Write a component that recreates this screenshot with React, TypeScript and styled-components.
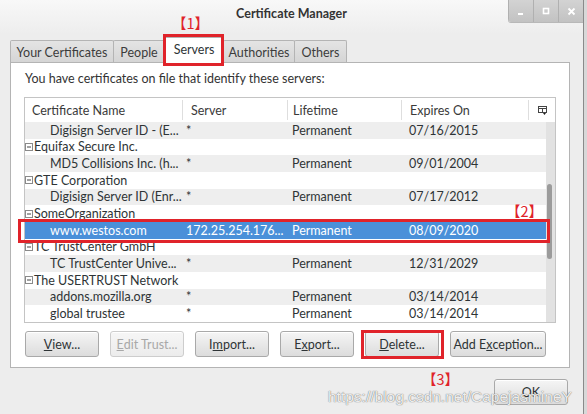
import React from "react";
import styled, { createGlobalStyle } from "styled-components";

const GlobalStyle = createGlobalStyle`
  html, body {
    margin: 0;
    padding: 0;
    background: #ededed;
  }
  body {
    font-family: Lato, "Liberation Sans", sans-serif;
    color: #2e3436;
  }
`;

const RED = "#e0232a";

const Screen = styled.div`
  position: relative;
  width: 587px;
  height: 414px;
  overflow: hidden;
  display: flex;
  background: #ededed;
`;

const Main = styled.div`
  width: 583px;
  display: flex;
  flex-direction: column;
`;

const RightEdge = styled.div`
  width: 3px;
  background: #d8d8d8;
  border-left: 1px solid #8a8a8a;
`;

const TitleBar = styled.div`
  height: 34px;
  display: grid;
  grid-template-columns: 1fr auto 1fr;
  align-items: start;
  background: linear-gradient(#f8f8f8, #ededed);
`;

const Title = styled.div`
  grid-column: 2;
  font-weight: bold;
  font-size: 12.5px;
  line-height: 15px;
  padding-top: 6px;
  color: #333;
`;

const Controls = styled.div`
  grid-column: 3;
  justify-self: end;
  display: flex;
  height: 22px;
  border-bottom-left-radius: 3px;
  overflow: hidden;
  box-shadow: 0 1px 0 #b8b8b8;
`;

const ControlButton = styled.div`
  width: 25px;
  height: 22px;
  display: flex;
  align-items: center;
  justify-content: center;
  background: linear-gradient(#d3d3d3, #c2c2c2);
  border-left: 1px solid #b0b0b0;
  box-sizing: border-box;
`;

const TabBar = styled.div`
  height: 28px;
  display: flex;
  align-items: flex-end;
  padding-left: 10px;
  position: relative;
  z-index: 1;
`;

const Tab = styled.div<{ $active?: boolean; $w: number }>`
  box-sizing: border-box;
  width: ${(p) => p.$w}px;
  height: ${(p) => (p.$active ? 26 : 22)}px;
  margin-bottom: ${(p) => (p.$active ? -1 : 0)}px;
  margin-right: -1px;
  display: flex;
  align-items: center;
  justify-content: center;
  padding-top: ${(p) => (p.$active ? 0 : 1)}px;
  padding-bottom: ${(p) => (p.$active ? 3 : 0)}px;
  font-size: 12.5px;
  white-space: nowrap;
  color: ${(p) => (p.$active ? "#2e3436" : "#3c3c3c")};
  background: ${(p) => (p.$active ? "#ffffff" : "linear-gradient(#e4e4e4, #d5d5d5)")};
  border: 1px solid #b4b4b4;
  border-bottom: none;
  border-radius: 2px 2px 0 0;
  position: relative;
  z-index: ${(p) => (p.$active ? 2 : 1)};
`;

const Panel = styled.div`
  box-sizing: border-box;
  margin-left: 10px;
  width: 560px;
  height: 306px;
  background: #ffffff;
  border: 1px solid #b4b4b4;
  padding: 0 13px 0 13px;
  display: flex;
  flex-direction: column;
`;

const Intro = styled.div`
  font-size: 12.5px;
  line-height: 16px;
  margin-top: 8px;
  padding-left: 1px;
  color: #333;
`;

const Tree = styled.div`
  margin-top: 10px;
  width: 532px;
  height: 226px;
  box-sizing: border-box;
  border: 1px solid #c4c4c4;
  display: flex;
  flex-direction: column;
`;

const HeaderRow = styled.div`
  height: 24px;
  display: grid;
  grid-template-columns: 158px 105px 114px 127px 1fr;
  background: #ffffff;
  font-size: 12.5px;
  color: #3a3a3a;
`;

const HeaderCell = styled.div<{ $pad: number; $last?: boolean }>`
  display: flex;
  align-items: center;
  padding-left: ${(p) => p.$pad}px;
  justify-content: ${(p) => (p.$last ? "center" : "flex-start")};
  border-right: ${(p) => (p.$last ? "none" : "1px solid #dedede")};
  margin: 2px 0;
`;

const TreeBody = styled.div`
  flex: 1;
  display: flex;
`;

const Rows = styled.div`
  flex: 1;
  display: grid;
  grid-auto-rows: calc(200px / 12);
`;

const Row = styled.div<{ $shade?: boolean; $selected?: boolean }>`
  display: grid;
  grid-template-columns: 158px 105px 114px 1fr;
  align-items: center;
  font-size: 12.5px;
  white-space: nowrap;
  overflow: hidden;
  background: ${(p) => (p.$selected ? "#4a90d9" : p.$shade ? "#eeeeee" : "#ffffff")};
  color: ${(p) => (p.$selected ? "#ffffff" : "#2e3436")};
`;

const Cell = styled.div<{ $pad: number }>`
  padding-left: ${(p) => p.$pad}px;
  display: flex;
  align-items: center;
  gap: 1px;
  overflow: hidden;
`;

const Scrollbar = styled.div`
  width: 9px;
  background: #e2e2e2;
  position: relative;
`;

const Thumb = styled.div`
  position: absolute;
  left: 1px;
  width: 5px;
  top: 62px;
  height: 75px;
  border-radius: 3px;
  background: #9b9b9b;
`;

const ButtonRow = styled.div`
  display: flex;
  gap: 11px;
  margin-top: 8px;
  padding-left: 1px;
`;

const Button = styled.div<{ $w?: number; $disabled?: boolean }>`
  box-sizing: border-box;
  width: ${(p) => p.$w ?? 74}px;
  height: 26px;
  display: flex;
  align-items: center;
  justify-content: center;
  font-size: 12.5px;
  white-space: nowrap;
  color: ${(p) => (p.$disabled ? "#a8a8a8" : "#2e3436")};
  background: ${(p) =>
    p.$disabled ? "linear-gradient(#f6f6f6, #ececec)" : "linear-gradient(#f5f5f5, #dcdcdc)"};
  border: 1px solid ${(p) => (p.$disabled ? "#cdcdcd" : "#a9a9a9")};
  border-radius: 3px;
  box-shadow: inset 0 1px 0 #ffffff;
`;

const Footer = styled.div`
  flex: 1;
  display: flex;
  justify-content: flex-end;
  padding-top: 11px;
  padding-right: 15px;
`;

const Box = styled.div<{ $x: number; $y: number; $w: number; $h: number }>`
  position: absolute;
  left: ${(p) => p.$x}px;
  top: ${(p) => p.$y}px;
  width: ${(p) => p.$w}px;
  height: ${(p) => p.$h}px;
  box-sizing: border-box;
  border: 3px solid ${RED};
  pointer-events: none;
  z-index: 5;
`;

const Label = styled.div<{ $x: number; $y: number }>`
  position: absolute;
  left: ${(p) => p.$x}px;
  top: ${(p) => p.$y}px;
  font-family: "Noto Sans CJK SC", sans-serif;
  font-size: 14.5px;
  line-height: 16px;
  color: ${RED};
  z-index: 5;
`;

const Watermark = styled.div`
  position: absolute;
  left: 328px;
  top: 388px;
  font-family: "Liberation Sans", Arial, sans-serif;
  font-size: 15.5px;
  color: rgba(255, 255, 255, 0.9);
  text-shadow: 0 0 1px rgba(90, 90, 90, 0.8), 0 0 1px rgba(90, 90, 90, 0.6);
  z-index: 6;
  white-space: nowrap;
`;

const Expander = () => (
  <svg width="8" height="8" viewBox="0 0 8 8">
    <rect x="0.5" y="0.5" width="7" height="7" fill="#fff" stroke="#8a8a8a" />
    <line x1="2" y1="4" x2="6" y2="4" stroke="#444" />
  </svg>
);

const ColumnPicker = () => (
  <svg width="9" height="9" viewBox="0 0 9 9">
    <rect x="0.5" y="0.5" width="8" height="6" fill="none" stroke="#444" />
    <line x1="0.5" y1="2.5" x2="8.5" y2="2.5" stroke="#444" />
    <line x1="4.5" y1="2.5" x2="4.5" y2="6.5" stroke="#444" />
    <path d="M5 7 L8 7 L6.5 9 Z" fill="#222" />
  </svg>
);

type Item =
  | { kind: "org"; name: string }
  | { kind: "cert"; name: string; server: string; expires: string; selected?: boolean };

const items: Item[] = [
  { kind: "cert", name: "Digisign Server ID - (E...", server: "*", expires: "07/16/2015" },
  { kind: "org", name: "Equifax Secure Inc." },
  { kind: "cert", name: "MD5 Collisions Inc. (h...", server: "*", expires: "09/01/2004" },
  { kind: "org", name: "GTE Corporation" },
  { kind: "cert", name: "Digisign Server ID (Enr...", server: "*", expires: "07/17/2012" },
  { kind: "org", name: "SomeOrganization" },
  {
    kind: "cert",
    name: "www.westos.com",
    server: "172.25.254.176...",
    expires: "08/09/2020",
    selected: true,
  },
  { kind: "org", name: "TC TrustCenter GmbH" },
  { kind: "cert", name: "TC TrustCenter Unive...", server: "*", expires: "12/31/2029" },
  { kind: "org", name: "The USERTRUST Network" },
  { kind: "cert", name: "addons.mozilla.org", server: "*", expires: "03/14/2014" },
  { kind: "cert", name: "global trustee", server: "*", expires: "03/14/2014" },
];

const tabs = [
  { label: "Your Certificates", w: 104 },
  { label: "People", w: 52 },
  { label: "Servers", w: 60, active: true },
  { label: "Authorities", w: 72 },
  { label: "Others", w: 53 },
];

export default function App() {
  return (
    <Screen>
      <GlobalStyle />
      <Main>
        <TitleBar>
          <Title>Certificate Manager</Title>
          <Controls>
            <ControlButton>
              <svg width="8" height="8" viewBox="0 0 8 8">
                <rect x="1" y="6" width="5" height="2" fill="#fff" />
              </svg>
            </ControlButton>
            <ControlButton>
              <svg width="8" height="8" viewBox="0 0 8 8">
                <rect x="1.5" y="1.5" width="5" height="5" fill="none" stroke="#fff" strokeWidth="1.6" />
              </svg>
            </ControlButton>
            <ControlButton>
              <svg width="9" height="9" viewBox="0 0 9 9">
                <path d="M1.5 1.5 L7.5 7.5 M7.5 1.5 L1.5 7.5" stroke="#fff" strokeWidth="1.8" />
              </svg>
            </ControlButton>
          </Controls>
        </TitleBar>

        <TabBar>
          {tabs.map((t) => (
            <Tab key={t.label} $active={t.active} $w={t.w}>
              {t.label}
            </Tab>
          ))}
        </TabBar>

        <Panel>
          <Intro>You have certificates on file that identify these servers:</Intro>
          <Tree>
            <HeaderRow>
              <HeaderCell $pad={7}>Certificate Name</HeaderCell>
              <HeaderCell $pad={8}>Server</HeaderCell>
              <HeaderCell $pad={5}>Lifetime</HeaderCell>
              <HeaderCell $pad={8}>Expires On</HeaderCell>
              <HeaderCell $pad={0} $last>
                <ColumnPicker />
              </HeaderCell>
            </HeaderRow>
            <TreeBody>
              <Rows>
                {items.map((it, i) =>
                  it.kind === "org" ? (
                    <Row key={i} $shade={i % 2 === 0}>
                      <Cell $pad={0}>
                        <Expander />
                        {it.name}
                      </Cell>
                    </Row>
                  ) : (
                    <Row key={i} $shade={i % 2 === 0} $selected={it.selected}>
                      <Cell $pad={25}>{it.name}</Cell>
                      <Cell $pad={3}>{it.server}</Cell>
                      <Cell $pad={4}>Permanent</Cell>
                      <Cell $pad={7}>{it.expires}</Cell>
                    </Row>
                  )
                )}
              </Rows>
              <Scrollbar>
                <Thumb />
              </Scrollbar>
            </TreeBody>
          </Tree>
          <ButtonRow>
            <Button>
              <u>V</u>iew...
            </Button>
            <Button $disabled>
              <u>E</u>dit Trust...
            </Button>
            <Button>
              I<u>m</u>port...
            </Button>
            <Button>
              E<u>x</u>port...
            </Button>
            <Button>
              <u>D</u>elete...
            </Button>
            <Button $w={96}>
              Add E<u>x</u>ception...
            </Button>
          </ButtonRow>
        </Panel>

        <Footer>
          <Button>OK</Button>
        </Footer>
      </Main>
      <RightEdge />

      <Box $x={163} $y={34} $w={61} $h={32} />
      <Box $x={18} $y={219} $w={532} $h={24} />
      <Box $x={361} $y={330} $w={83} $h={29} />
      <Label $x={172} $y={15}>【1】</Label>
      <Label $x={506} $y={203}>【2】</Label>
      <Label $x={422} $y={371}>【3】</Label>
      <Watermark>https://blog.csdn.net/CapejasmineY</Watermark>
    </Screen>
  );
}
